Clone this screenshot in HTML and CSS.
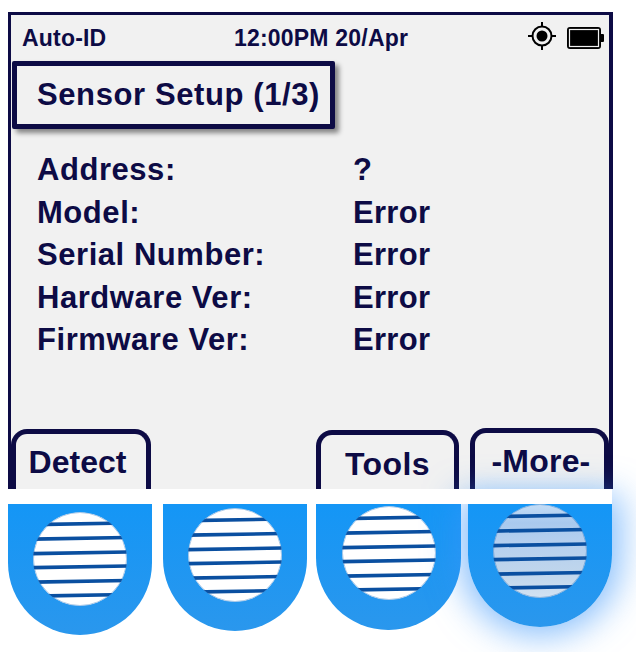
FILE: index.html
```html
<!DOCTYPE html>
<html lang="en">
<head>
    <meta charset="UTF-8">
    <title>Sensor Setup</title>
    <link rel="stylesheet" href="styles.css">
</head>
<body>
    <svg class="defs" width="0" height="0">
        <defs>
            <clipPath id="slat-clip">
                <circle cx="47" cy="47" r="47"/>
            </clipPath>
            <linearGradient id="glass" x1="0" y1="0" x2="0" y2="1">
                <stop offset="0" stop-color="#c4ddf6"/>
                <stop offset="0.2" stop-color="#a9c9ee"/>
                <stop offset="0.4" stop-color="#b4cfef"/>
                <stop offset="0.75" stop-color="#c0d6ec"/>
                <stop offset="1" stop-color="#d2e2f2"/>
            </linearGradient>
        </defs>
        <symbol id="slats" viewBox="0 0 94 94">
            <g clip-path="url(#slat-clip)">
                <circle class="slat-face" cx="47" cy="47" r="47"/>
                <g class="slat-lines" transform="rotate(-1 47 47)">
                    <rect x="0" y="10" width="94" height="3.6"/>
                    <rect x="0" y="24.5" width="94" height="3.6"/>
                    <rect x="0" y="39" width="94" height="3.6"/>
                    <rect x="0" y="53" width="94" height="3.6"/>
                    <rect x="0" y="67.5" width="94" height="3.6"/>
                    <rect x="0" y="81.5" width="94" height="3.6"/>
                </g>
                <circle class="slat-rim" cx="47" cy="47" r="46.5"/>
            </g>
        </symbol>
    </svg>

    <div class="screen">
        <div class="status">
            <span class="status-name">Auto-ID</span>
            <span class="status-time">12:00PM 20/Apr</span>
            <svg class="icon-gps" width="28" height="28" viewBox="0 0 28 28">
                <circle cx="14" cy="14" r="9.5" fill="none" stroke="#000" stroke-width="2"/>
                <circle cx="14" cy="14" r="5.5" fill="#000"/>
                <path d="M14 0v5M14 23v5M0 14h5M23 14h5" stroke="#000" stroke-width="2"/>
            </svg>
            <svg class="icon-battery" width="38" height="22" viewBox="0 0 38 22">
                <rect x="1" y="1" width="32" height="20" rx="2" fill="#000" stroke="#000" stroke-width="2"/>
                <rect x="2.5" y="2.5" width="29" height="17" fill="none" stroke="#f1f1f1" stroke-width="1.2"/>
                <path d="M34 7h2a1 1 0 0 1 1 1v6a1 1 0 0 1-1 1h-2z" fill="#000"/>
            </svg>
        </div>

        <h1 class="title">Sensor Setup (1/3)</h1>

        <dl class="details">
            <dt>Address:</dt><dd>?</dd>
            <dt>Model:</dt><dd>Error</dd>
            <dt>Serial Number:</dt><dd>Error</dd>
            <dt>Hardware Ver:</dt><dd>Error</dd>
            <dt>Firmware Ver:</dt><dd>Error</dd>
        </dl>

        <div class="softkeys">
            <div class="softkey softkey-detect">Detect</div>
            <div class="softkey softkey-tools">Tools</div>
            <div class="softkey softkey-more">-More-</div>
        </div>
    </div>

    <div class="keys">
        <div class="key key-1"><svg class="slats"><use href="#slats"/></svg></div>
        <div class="key key-2"><svg class="slats"><use href="#slats"/></svg></div>
        <div class="key key-3"><svg class="slats"><use href="#slats"/></svg></div>
        <div class="key key-4"><svg class="slats"><use href="#slats"/></svg></div>
    </div>
</body>
</html>
```

FILE: styles.css
```css
body {
    margin: 0;
    padding: 12px 0 0 8px;
    width: 628px;
    height: 640px;
    overflow: hidden;
    background-color: #fff;
    font-family: "Liberation Sans", Arial, sans-serif;
    font-weight: bold;
    color: #0d0b45;
}

.defs {
    position: absolute;
}

.screen {
    box-sizing: border-box;
    width: 605px;
    height: 477px;
    display: flex;
    flex-direction: column;
    overflow: hidden;
    background-color: #f1f1f1;
    border: solid #0d0b45;
    border-width: 3px 4px 0 3px;
}

.status {
    display: flex;
    align-items: center;
    height: 46px;
    padding-left: 11px;
    font-size: 23px;
    letter-spacing: 0.2px;
}

.status-name {
    width: 212px;
}

.status-time {
    width: 294px;
}

.icon-gps {
    margin: 0 11px 4px 0;
}

.title {
    box-sizing: border-box;
    width: 323px;
    height: 68px;
    margin: 0 0 0 1px;
    padding-left: 20px;
    line-height: 58px;
    font-size: 31px;
    letter-spacing: 0.6px;
    background-color: #f1f1f1;
    border: 5px solid #0d0b45;
    border-radius: 2px;
    box-shadow: 4px 4px 5px rgba(0, 0, 0, 0.45);
}

.details {
    display: grid;
    grid-template-columns: 316px 1fr;
    grid-auto-rows: 42.6px;
    margin: 20px 0 0 26px;
    font-size: 31px;
    line-height: 41px;
    letter-spacing: 0.3px;
}

.details dt {
    letter-spacing: 0.55px;
}

.details dd {
    margin: 0;
}

.softkeys {
    display: flex;
    align-items: flex-end;
    margin-top: auto;
}

.softkey {
    box-sizing: border-box;
    flex-shrink: 0;
    border: 5px solid #0d0b45;
    border-bottom: none;
    border-radius: 16px 16px 0 0;
    font-size: 32px;
    text-align: center;
}

.softkey-detect {
    width: 140px;
    height: 60px;
    padding-right: 7px;
    line-height: 56px;
}

.softkey-tools {
    width: 143px;
    height: 59px;
    margin-left: 165px;
    line-height: 58px;
    letter-spacing: 0.4px;
}

.softkey-more {
    width: 139px;
    height: 61px;
    margin-left: 11px;
    padding-left: 3px;
    line-height: 56px;
    letter-spacing: 0.2px;
    background-image: linear-gradient(#f1f1f1 70%, #e6eef6);
}

.keys {
    position: relative;
    display: flex;
    margin-top: 15px;
}

/* white strip between the display and the keys, the glow stays under it */
.keys::before {
    content: "";
    position: absolute;
    z-index: 1;
    left: 0;
    top: -15px;
    width: 604px;
    height: 15px;
    background-color: #fff;
}

.key {
    box-sizing: border-box;
    display: flex;
    justify-content: center;
    width: 144px;
    background-image: linear-gradient(#1496f6, #2a97ed);
    border-radius: 0 0 72px 72px;
}

.key-1 {
    height: 131px;
    padding-top: 8px;
}

.key-2 {
    height: 127px;
    margin-left: 11px;
    padding-top: 4px;
}

.key-3 {
    width: 145px;
    height: 126px;
    margin-left: 9px;
    padding-top: 2px;
}

.key-4 {
    --slat-face: url(#glass);
    height: 123px;
    margin-left: 7px;
    box-shadow: 0 0 34px 9px rgba(60, 150, 250, 0.6);
}

.slats {
    width: 94px;
    height: 94px;
}

.slat-face {
    fill: var(--slat-face, #fff);
}

.slat-lines {
    fill: #0a4fa0;
}

.slat-rim {
    fill: none;
    stroke: #0a5fb8;
    stroke-opacity: 0.35;
    stroke-width: 1;
}
```
